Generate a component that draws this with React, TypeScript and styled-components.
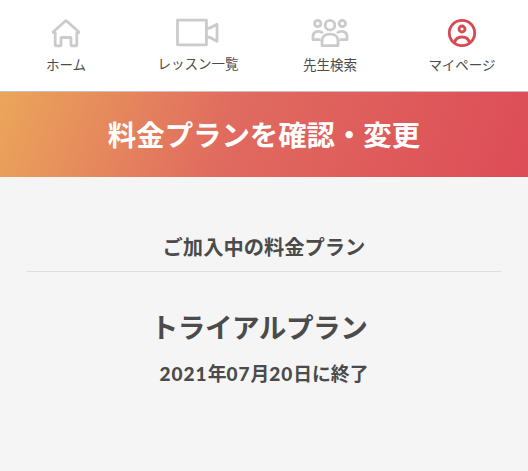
import React from "react";
import styled, { createGlobalStyle } from "styled-components";

const GlobalStyle = createGlobalStyle`
  * { box-sizing: border-box; }
  body {
    margin: 0;
    background: #f5f5f5;
    color: #4b4b4b;
    font-family: "Noto Sans CJK JP", sans-serif;
  }
`;

const Page = styled.div`
  min-height: 471px;
  background: #f5f5f5;
`;

const Nav = styled.nav`
  display: grid;
  grid-template-columns: repeat(4, 1fr);
  height: 92px;
  background: #fff;
  border-bottom: 1px solid #c9bfc3;
`;

const NavItem = styled.a<{ $active?: boolean }>`
  display: flex;
  flex-direction: column;
  align-items: center;
  padding-top: 13px;
  color: ${(p) => (p.$active ? "#d84a52" : "#cbcbcb")};
  text-decoration: none;
`;

const Icon = styled.svg`
  display: block;
  width: 46px;
  height: 40px;
  fill: none;
  stroke: currentColor;
  stroke-width: 2.8;
`;

const NavLabel = styled.span<{ $raise?: number }>`
  margin-top: ${(p) => 1 - (p.$raise ?? 0)}px;
  font-size: 13.5px;
  line-height: 20px;
  white-space: nowrap;
  color: #4b4b4b;
`;

const Hero = styled.header`
  display: flex;
  align-items: center;
  justify-content: center;
  height: 85px;
  padding-bottom: 2px;
  background: linear-gradient(110deg, #eba65a 0%, #e06b5f 43%, #dd4c57 100%);
`;

const Title = styled.h1`
  margin: 0;
  font-size: 28.4px;
  line-height: 42px;
  font-weight: 700;
  white-space: nowrap;
  color: #fff;
`;

const Plan = styled.main`
  display: flex;
  flex-direction: column;
  margin: 0 27px;
  padding-top: 54px;
  text-align: center;
  font-weight: 700;
`;

const SectionTitle = styled.h2`
  margin: 0;
  height: 41px;
  border-bottom: 1px solid #dedede;
  font-size: 20.3px;
  line-height: 30px;
`;

const PlanName = styled.p`
  margin: 33px 0 0;
  padding-right: 10px;
  font-size: 27.6px;
  letter-spacing: -0.5px;
  line-height: 42px;
`;

const EndDate = styled.p`
  margin: 12px 0 0;
  font-size: 18.8px;
  line-height: 28px;
  white-space: nowrap;
`;

const Digits = styled.span`
  font-family: Lato, sans-serif;
  font-weight: 900;
  font-size: 19px;
  letter-spacing: 1px;
`;

export default function App() {
  return (
    <>
      <GlobalStyle />
      <Page>
        <Nav>
          <NavItem>
            <Icon viewBox="0 0 46 40">
              <path
                strokeLinejoin="bevel"
                d="M9.5 19.5 23 7.5l13.5 12h-2.700v13.300h-5.800v-8.300h-10v8.300h-5.800V19.500Z"
              />
            </Icon>
            <NavLabel>ホーム</NavLabel>
          </NavItem>
          <NavItem>
            <Icon viewBox="0 0 46 40">
              <path
                strokeLinejoin="round"
                d="M2.500 7.200h28.900v24.600H2.500ZM31.400 15.500l3.600-.5 7-3.700v17l-7-3.800-3.600-.5"
              />
            </Icon>
            <NavLabel $raise={1}>レッスン一覧</NavLabel>
          </NavItem>
          <NavItem>
            <Icon viewBox="0 0 46 40">
              <circle cx="23" cy="12.2" r="4.8" />
              <circle cx="10.7" cy="10.5" r="3.2" />
              <circle cx="35.3" cy="10.5" r="3.2" />
              <path
                strokeLinejoin="round"
                d="M15 32.700v-5c0-4 3-6.500 8-6.500s8 2.500 8 6.500v5ZM13.500 26.600H6v-3c0-3.300 2-5.300 5.500-5.300 2 0 3.500.8 4.200 2M32.500 26.600H40v-3c0-3.300-2-5.300-5.500-5.300-2 0-3.500.8-4.200 2"
              />
            </Icon>
            <NavLabel>先生検索</NavLabel>
          </NavItem>
          <NavItem $active>
            <Icon viewBox="0 0 46 40">
              <circle cx="23" cy="20" r="12.7" />
              <circle cx="23" cy="16" r="3" />
              <path d="M15.500 30c.7-3.800 3.700-6 7.500-6s6.800 2.200 7.500 6" />
            </Icon>
            <NavLabel>マイページ</NavLabel>
          </NavItem>
        </Nav>
        <Hero>
          <Title>料金プランを確認・変更</Title>
        </Hero>
        <Plan>
          <SectionTitle>ご加入中の料金プラン</SectionTitle>
          <PlanName>トライアルプラン</PlanName>
          <EndDate>
            <Digits>2021</Digits>年<Digits>07</Digits>月<Digits>20</Digits>日に終了
          </EndDate>
        </Plan>
      </Page>
    </>
  );
}
